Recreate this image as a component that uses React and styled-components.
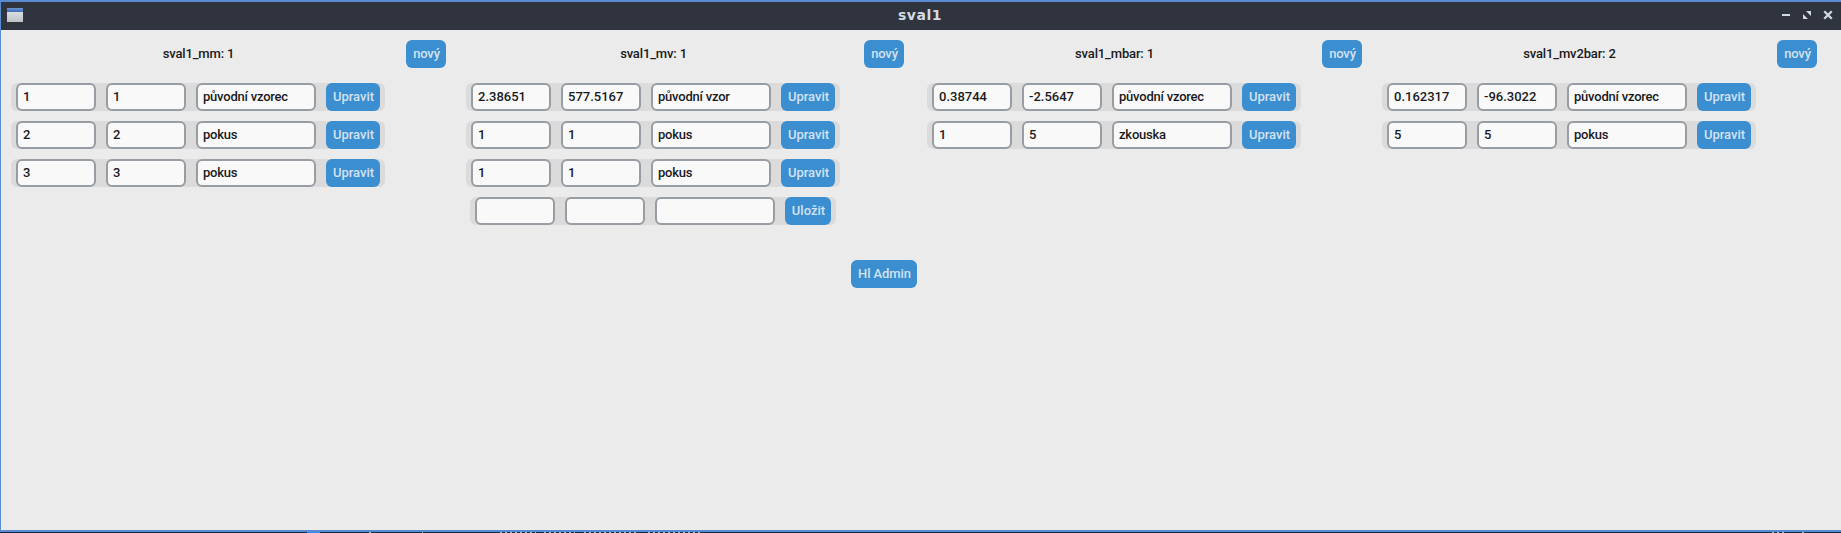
import React from "react";
import styled, { createGlobalStyle } from "styled-components";

const GlobalStyle = createGlobalStyle`
  * { box-sizing: border-box; }
  body { margin: 0; background: #0d2748; overflow: hidden; }
`;

const Desktop = styled.div`
  display: flex;
  flex-direction: column;
  width: 1841px;
  height: 533px;
  font-family: Roboto, "Liberation Sans", sans-serif;
  font-size: 13px;
  font-weight: 500;
  color: #1a1a1a;
`;

const Window = styled.div`
  display: flex;
  flex-direction: column;
  height: 532px;
  border: solid #5b8bd0;
  border-width: 2px 0 2px 1px;
  background: #ebebeb;
`;

const TitleBar = styled.header`
  display: flex;
  align-items: center;
  justify-content: space-between;
  flex: 0 0 28px;
  padding: 0 8px 2px 6px;
  background: #2f343f;
`;

const TitleSide = styled.div`
  display: flex;
  width: 60px;
  justify-content: ${(p) => (p.$end ? "flex-end" : "flex-start")};
`;

const Title = styled.h1`
  margin: 0;
  font: bold 14px/24px "DejaVu Sans", sans-serif;
  letter-spacing: 0.5px;
  color: #d3dae3;
`;

const Content = styled.main`
  display: flex;
  flex-direction: column;
  align-items: flex-start;
  flex: 1;
  padding: 10px 0 0 10px;
`;

const Columns = styled.div`
  display: flex;
  align-items: flex-start;
  height: 220px;
`;

const Section = styled.section`
  display: grid;
  grid-template-columns: 374px 40px;
  grid-template-rows: 28px auto;
  row-gap: 15px;
  column-gap: ${(p) => p.$gap}px;
  margin-right: ${(p) => p.$after}px;
`;

const Heading = styled.div`
  padding-left: 1px;
  text-align: center;
  line-height: 27px;
  letter-spacing: -0.15px;
`;

const Rows = styled.div`
  display: flex;
  flex-direction: column;
  align-items: center;
  gap: 10px;
`;

const Row = styled.div`
  display: flex;
  gap: 10px;
  padding: 0 5px;
  border-radius: 6px;
  background: #dbdbdb;
`;

const Entry = styled.div`
  width: ${(p) => (p.$wide ? 120 : 80)}px;
  height: 28px;
  padding-left: 5px;
  border: 2px solid #979da2;
  border-radius: 6px;
  background: #f9f9fa;
  line-height: 23px;
  letter-spacing: ${(p) => (p.$wide ? -0.22 : 0)}px;
  white-space: nowrap;
`;

const Button = styled.button`
  width: ${(p) => p.$width}px;
  height: 28px;
  padding: 0 0 1px 1px;
  border: 0;
  border-radius: 6px;
  background: #3b8ed0;
  color: #d3e2f1;
  font: inherit;
  letter-spacing: ${(p) => p.$tracking || 0}px;
  white-space: nowrap;
`;

const Footer = styled.footer`
  display: flex;
  padding-left: 840px;
`;

const Taskbar = styled.svg`
  display: block;
`;

const sections = [
  {
    title: "sval1_mm: 1",
    gap: 21,
    after: 20,
    rows: [
      ["1", "1", "původní vzorec"],
      ["2", "2", "pokus"],
      ["3", "3", "pokus"],
    ],
  },
  {
    title: "sval1_mv: 1",
    gap: 24,
    after: 23,
    rows: [
      ["2.38651", "577.5167", "původní vzor"],
      ["1", "1", "pokus"],
      ["1", "1", "pokus"],
    ],
    draft: true,
  },
  {
    title: "sval1_mbar: 1",
    gap: 21,
    after: 20,
    rows: [
      ["0.38744", "-2.5647", "původní vzorec"],
      ["1", "5", "zkouska"],
    ],
  },
  {
    title: "sval1_mv2bar: 2",
    gap: 21,
    after: 0,
    rows: [
      ["0.162317", "-96.3022", "původní vzorec"],
      ["5", "5", "pokus"],
    ],
  },
];

function FormRow({ values, action, width }) {
  return (
    <Row>
      <Entry>{values[0]}</Entry>
      <Entry>{values[1]}</Entry>
      <Entry $wide>{values[2]}</Entry>
      <Button $width={width}>{action}</Button>
    </Row>
  );
}

function AppIcon() {
  return (
    <svg width="16" height="16" viewBox="0 0 16 16">
      <defs>
        <linearGradient id="pane" x1="0" y1="0" x2="0" y2="1">
          <stop offset="0" stopColor="#e6e8ea" />
          <stop offset="1" stopColor="#bfc3c5" />
        </linearGradient>
        <linearGradient id="bar" x1="0" y1="0" x2="0" y2="1">
          <stop offset="0" stopColor="#6e93d2" />
          <stop offset="1" stopColor="#3c68b4" />
        </linearGradient>
      </defs>
      <rect y="1" width="16" height="14" fill="url(#pane)" />
      <rect y="1" width="16" height="4" fill="url(#bar)" />
    </svg>
  );
}

function WindowControls() {
  return (
    <svg width="52" height="12" viewBox="0 0 52 12" fill="#d3dae3">
      <rect x="1" y="5" width="8" height="2" />
      <path d="M25 2h5v5zM22 5v5h5z" />
      <path d="M44 3l6 6M50 3l-6 6" stroke="#d3dae3" strokeWidth="2.2" strokeLinecap="square" />
    </svg>
  );
}

export default function App() {
  return (
    <>
      <GlobalStyle />
      <Desktop>
        <Window>
          <TitleBar>
            <TitleSide><AppIcon /></TitleSide>
            <Title>sval1</Title>
            <TitleSide $end><WindowControls /></TitleSide>
          </TitleBar>
          <Content>
            <Columns>
              {sections.map((s) => (
                <Section key={s.title} $gap={s.gap} $after={s.after}>
                  <Heading>{s.title}</Heading>
                  <Button $width={40} $tracking={-0.15}>nový</Button>
                  <Rows>
                    {s.rows.map((values, i) => (
                      <FormRow key={i} values={values} action="Upravit" width={54} />
                    ))}
                    {s.draft && <FormRow values={["", "", ""]} action="Uložit" width={46} />}
                  </Rows>
                </Section>
              ))}
            </Columns>
            <Footer>
              <Button $width={66} $tracking={-0.1}>Hl Admin</Button>
            </Footer>
          </Content>
        </Window>
        <Taskbar width="1841" height="1" shapeRendering="crispEdges">
          <rect x="307" width="13" height="1" fill="#2b8cf0" />
          <path
            d="M369 .5h2M422 .5h1M500 .5h36M544 .5h31M584 .5h54M648 .5h55M1772 .5h14M1802 .5h2"
            stroke="#a9b6c6"
            strokeDasharray="2 3"
          />
        </Taskbar>
      </Desktop>
    </>
  );
}
